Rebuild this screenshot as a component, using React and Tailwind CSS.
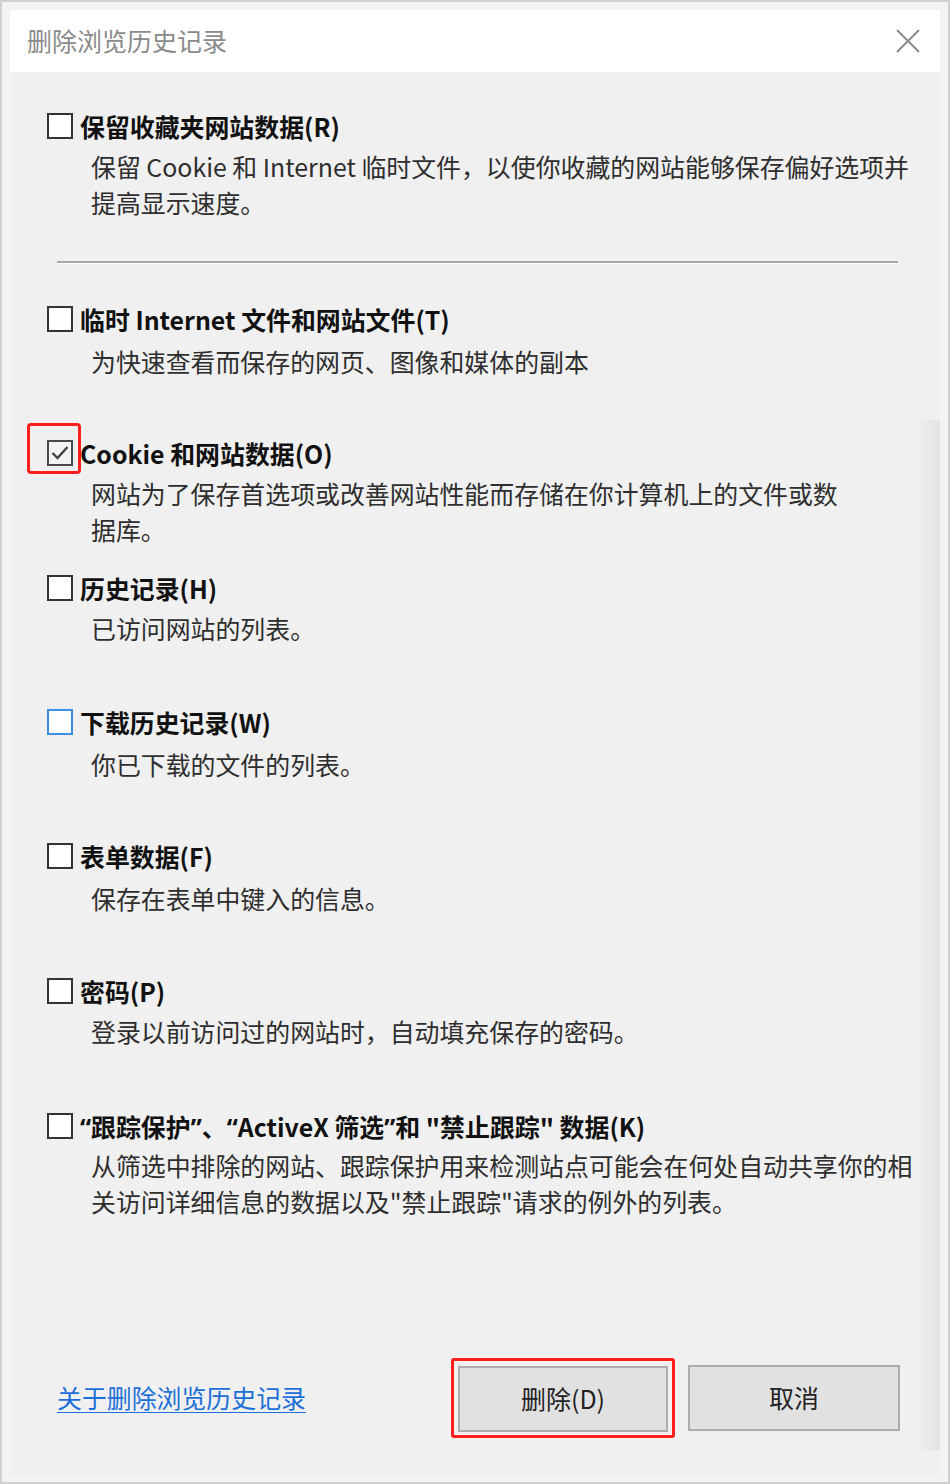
import React from 'react';

const FONT = { fontFamily: '"Noto Sans CJK SC", "Noto Sans", sans-serif' };

// narrow latin quotes, like the original dialog
const Q = ({ children }) => <span style={{ fontFamily: '"Noto Sans", sans-serif' }}>{children}</span>;

const ITEMS = [
  {
    id: 'favorites',
    label: '保留收藏夹网站数据(R)',
    desc: ['保留 Cookie 和 Internet 临时文件，以使你收藏的网站能够保存偏好选项并', '提高显示速度。'],
    mt: 'mt-[36px]',
    dt: 'mt-[4px]',
  },
  {
    id: 'temp',
    label: '临时 Internet 文件和网站文件(T)',
    desc: ['为快速查看而保存的网页、图像和媒体的副本'],
    mt: 'mt-[37px]',
    dt: 'mt-[6px]',
  },
  {
    id: 'cookie',
    label: 'Cookie 和网站数据(O)',
    desc: ['网站为了保存首选项或改善网站性能而存储在你计算机上的文件或数', '据库。'],
    mt: 'mt-[56px]',
    dt: 'mt-[4px]',
    checked: true,
    highlight: true,
  },
  {
    id: 'history',
    label: '历史记录(H)',
    desc: ['已访问网站的列表。'],
    mt: 'mt-[23px]',
    dt: 'mt-[4px]',
  },
  {
    id: 'downloads',
    label: '下载历史记录(W)',
    desc: ['你已下载的文件的列表。'],
    mt: 'mt-[58px]',
    dt: 'mt-[6px]',
    focus: true,
  },
  {
    id: 'forms',
    label: '表单数据(F)',
    desc: ['保存在表单中键入的信息。'],
    mt: 'mt-[56px]',
    dt: 'mt-[6px]',
  },
  {
    id: 'passwords',
    label: '密码(P)',
    desc: ['登录以前访问过的网站时，自动填充保存的密码。'],
    mt: 'mt-[57px]',
    dt: 'mt-[4px]',
  },
  {
    id: 'tracking',
    label: (
      <>
        <Q>“</Q>跟踪保护<Q>”</Q>、<Q>“</Q>ActiveX 筛选<Q>”</Q>和 "禁止跟踪" 数据(K)
      </>
    ),
    desc: ['从筛选中排除的网站、跟踪保护用来检测站点可能会在何处自动共享你的相', '关访问详细信息的数据以及"禁止跟踪"请求的例外的列表。'],
    mt: 'mt-[59px]',
    dt: 'mt-[3px]',
  },
];

const Checkbox = ({ checked, focus, highlight }) => (
  <div className="relative w-[26px] h-[26px] shrink-0">
    <div
      className={
        checked
          ? 'w-full h-full border-2 border-[#4a4a4a] bg-[#f4f4f4] flex items-center justify-center'
          : focus
          ? 'w-full h-full border-2 border-[#3a8ee6] bg-white'
          : 'w-full h-full border-2 border-[#333333] bg-white'
      }
    >
      {checked && (
        <svg width="20" height="20" viewBox="0 0 20 20">
          <path d="M2.5 10 L7.5 15 L17.5 4" fill="none" stroke="#444444" strokeWidth="2.4" />
        </svg>
      )}
    </div>
    {highlight && (
      <div className="absolute left-[-20px] top-[-17px] w-[54px] h-[51px] border-[3px] border-[#ff1f1f] rounded-[4px]" />
    )}
  </div>
);

const Item = ({ item }) => (
  <div className={item.mt}>
    <div className="flex items-center h-9">
      <Checkbox checked={item.checked} focus={item.focus} highlight={item.highlight} />
      <span className="ml-[7px] text-[24.9px] font-bold text-[#111111] whitespace-nowrap leading-9">
        {item.label}
      </span>
    </div>
    <div className={`${item.dt} pl-[44px] text-[24.9px] leading-9 text-[#2e2e2e] whitespace-nowrap`}>
      {item.desc.map((line, i) => (
        <div key={i}>{line}</div>
      ))}
    </div>
  </div>
);

export default function App() {
  return (
    <div className="w-[950px] h-[1484px] border-2 border-[#cfcfcf] bg-[#f3f3f3] p-[8px] pb-[9px]" style={FONT}>
      <div className="relative w-[930px] h-[1464px] bg-[#f0f0f0] flex flex-col overflow-hidden">
        {/* title bar */}
        <div className="h-[62px] bg-white flex items-center justify-between pl-[17px] pr-[20px] shrink-0">
          <span className="text-[25px] text-[#8a8a8a]">删除浏览历史记录</span>
          <svg width="24" height="24" viewBox="0 0 24 24">
            <path d="M1 1 L23 23 M23 1 L1 23" stroke="#8c8c8c" strokeWidth="2" fill="none" />
          </svg>
        </div>

        {/* subtle shade along the right edge */}
        <div className="absolute right-0 top-[410px] w-[26px] h-[1030px] bg-gradient-to-r from-transparent to-[#dedede] opacity-70" />

        <div className="relative pl-[37px] pr-[20px]">
          <Item item={ITEMS[0]} />
          <div className="mt-[41px] ml-[10px] w-[841px]">
            <div className="h-[2px] bg-[#a8a8a8]" />
            <div className="h-[1px] bg-white" />
          </div>
          {ITEMS.slice(1).map((item) => (
            <Item key={item.id} item={item} />
          ))}
        </div>

        {/* footer */}
        <div className="relative mt-[139px] flex items-center pl-[47px] pr-[40px]">
          <a
            href="#"
            className="text-[24.9px] text-[#1c6fd8] underline underline-offset-4 decoration-1"
          >
            关于删除浏览历史记录
          </a>
          <div className="ml-auto flex items-center">
            <div className="border-[3px] border-[#ff1f1f] rounded-[3px] px-[4px] pt-[5px] pb-[3px]">
              <button className="w-[210px] h-[66px] bg-[#e1e1e1] border-2 border-[#adadad] text-[25px] text-[#222222]">
                删除(D)
              </button>
            </div>
            <button className="ml-[13px] w-[212px] h-[66px] bg-[#e1e1e1] border-2 border-[#adadad] text-[25px] text-[#222222]">
              取消
            </button>
          </div>
        </div>
      </div>
    </div>
  );
}
